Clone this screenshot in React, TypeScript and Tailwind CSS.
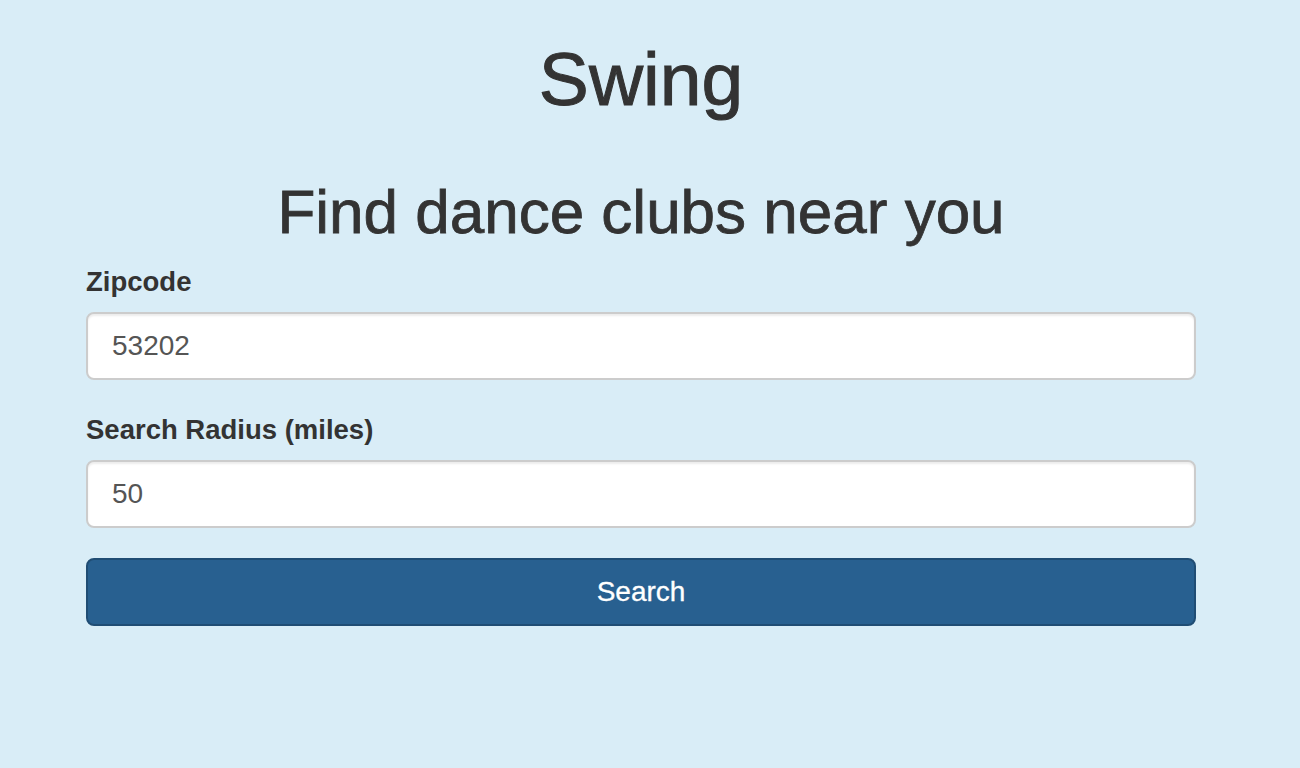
export default function App() {
  return (
    <div className="min-h-[768px] w-full bg-[#d9edf7] font-['Liberation_Sans',Arial,sans-serif] text-[#333]">
      <div className="w-[1110px] ml-[86px] pt-[40px]">
        <h1 className="text-center text-[75px] leading-[79px] font-medium [-webkit-text-stroke:1px_#333]">Swing</h1>
        <h2 className="mt-[60px] mb-[17px] text-center text-[62px] leading-[66px] font-medium [-webkit-text-stroke:0.8px_#333]">
          Find dance clubs near you
        </h2>
        <form onSubmit={(e) => e.preventDefault()}>
          <div className="mb-[30px]">
            <label className="block mb-[10px] text-[27.5px] leading-[40px] font-bold">Zipcode</label>
            <input
              type="text"
              defaultValue="53202"
              className="block w-full h-[68px] px-[24px] text-[28px] text-[#555] bg-white border-2 border-[#ccc] rounded-[8px] shadow-[inset_0_2px_2px_rgba(0,0,0,0.075)] outline-none"
            />
          </div>
          <div className="mb-[30px]">
            <label className="block mb-[10px] text-[27.5px] leading-[40px] font-bold">Search Radius (miles)</label>
            <input
              type="text"
              defaultValue="50"
              className="block w-full h-[68px] px-[24px] text-[28px] text-[#555] bg-white border-2 border-[#ccc] rounded-[8px] shadow-[inset_0_2px_2px_rgba(0,0,0,0.075)] outline-none"
            />
          </div>
          <button
            type="submit"
            className="block w-full h-[68px] text-[28px] text-white bg-[#286090] border-2 border-[#204d74] rounded-[8px] [-webkit-text-stroke:0.3px_#fff]"
          >
            Search
          </button>
        </form>
      </div>
    </div>
  );
}
